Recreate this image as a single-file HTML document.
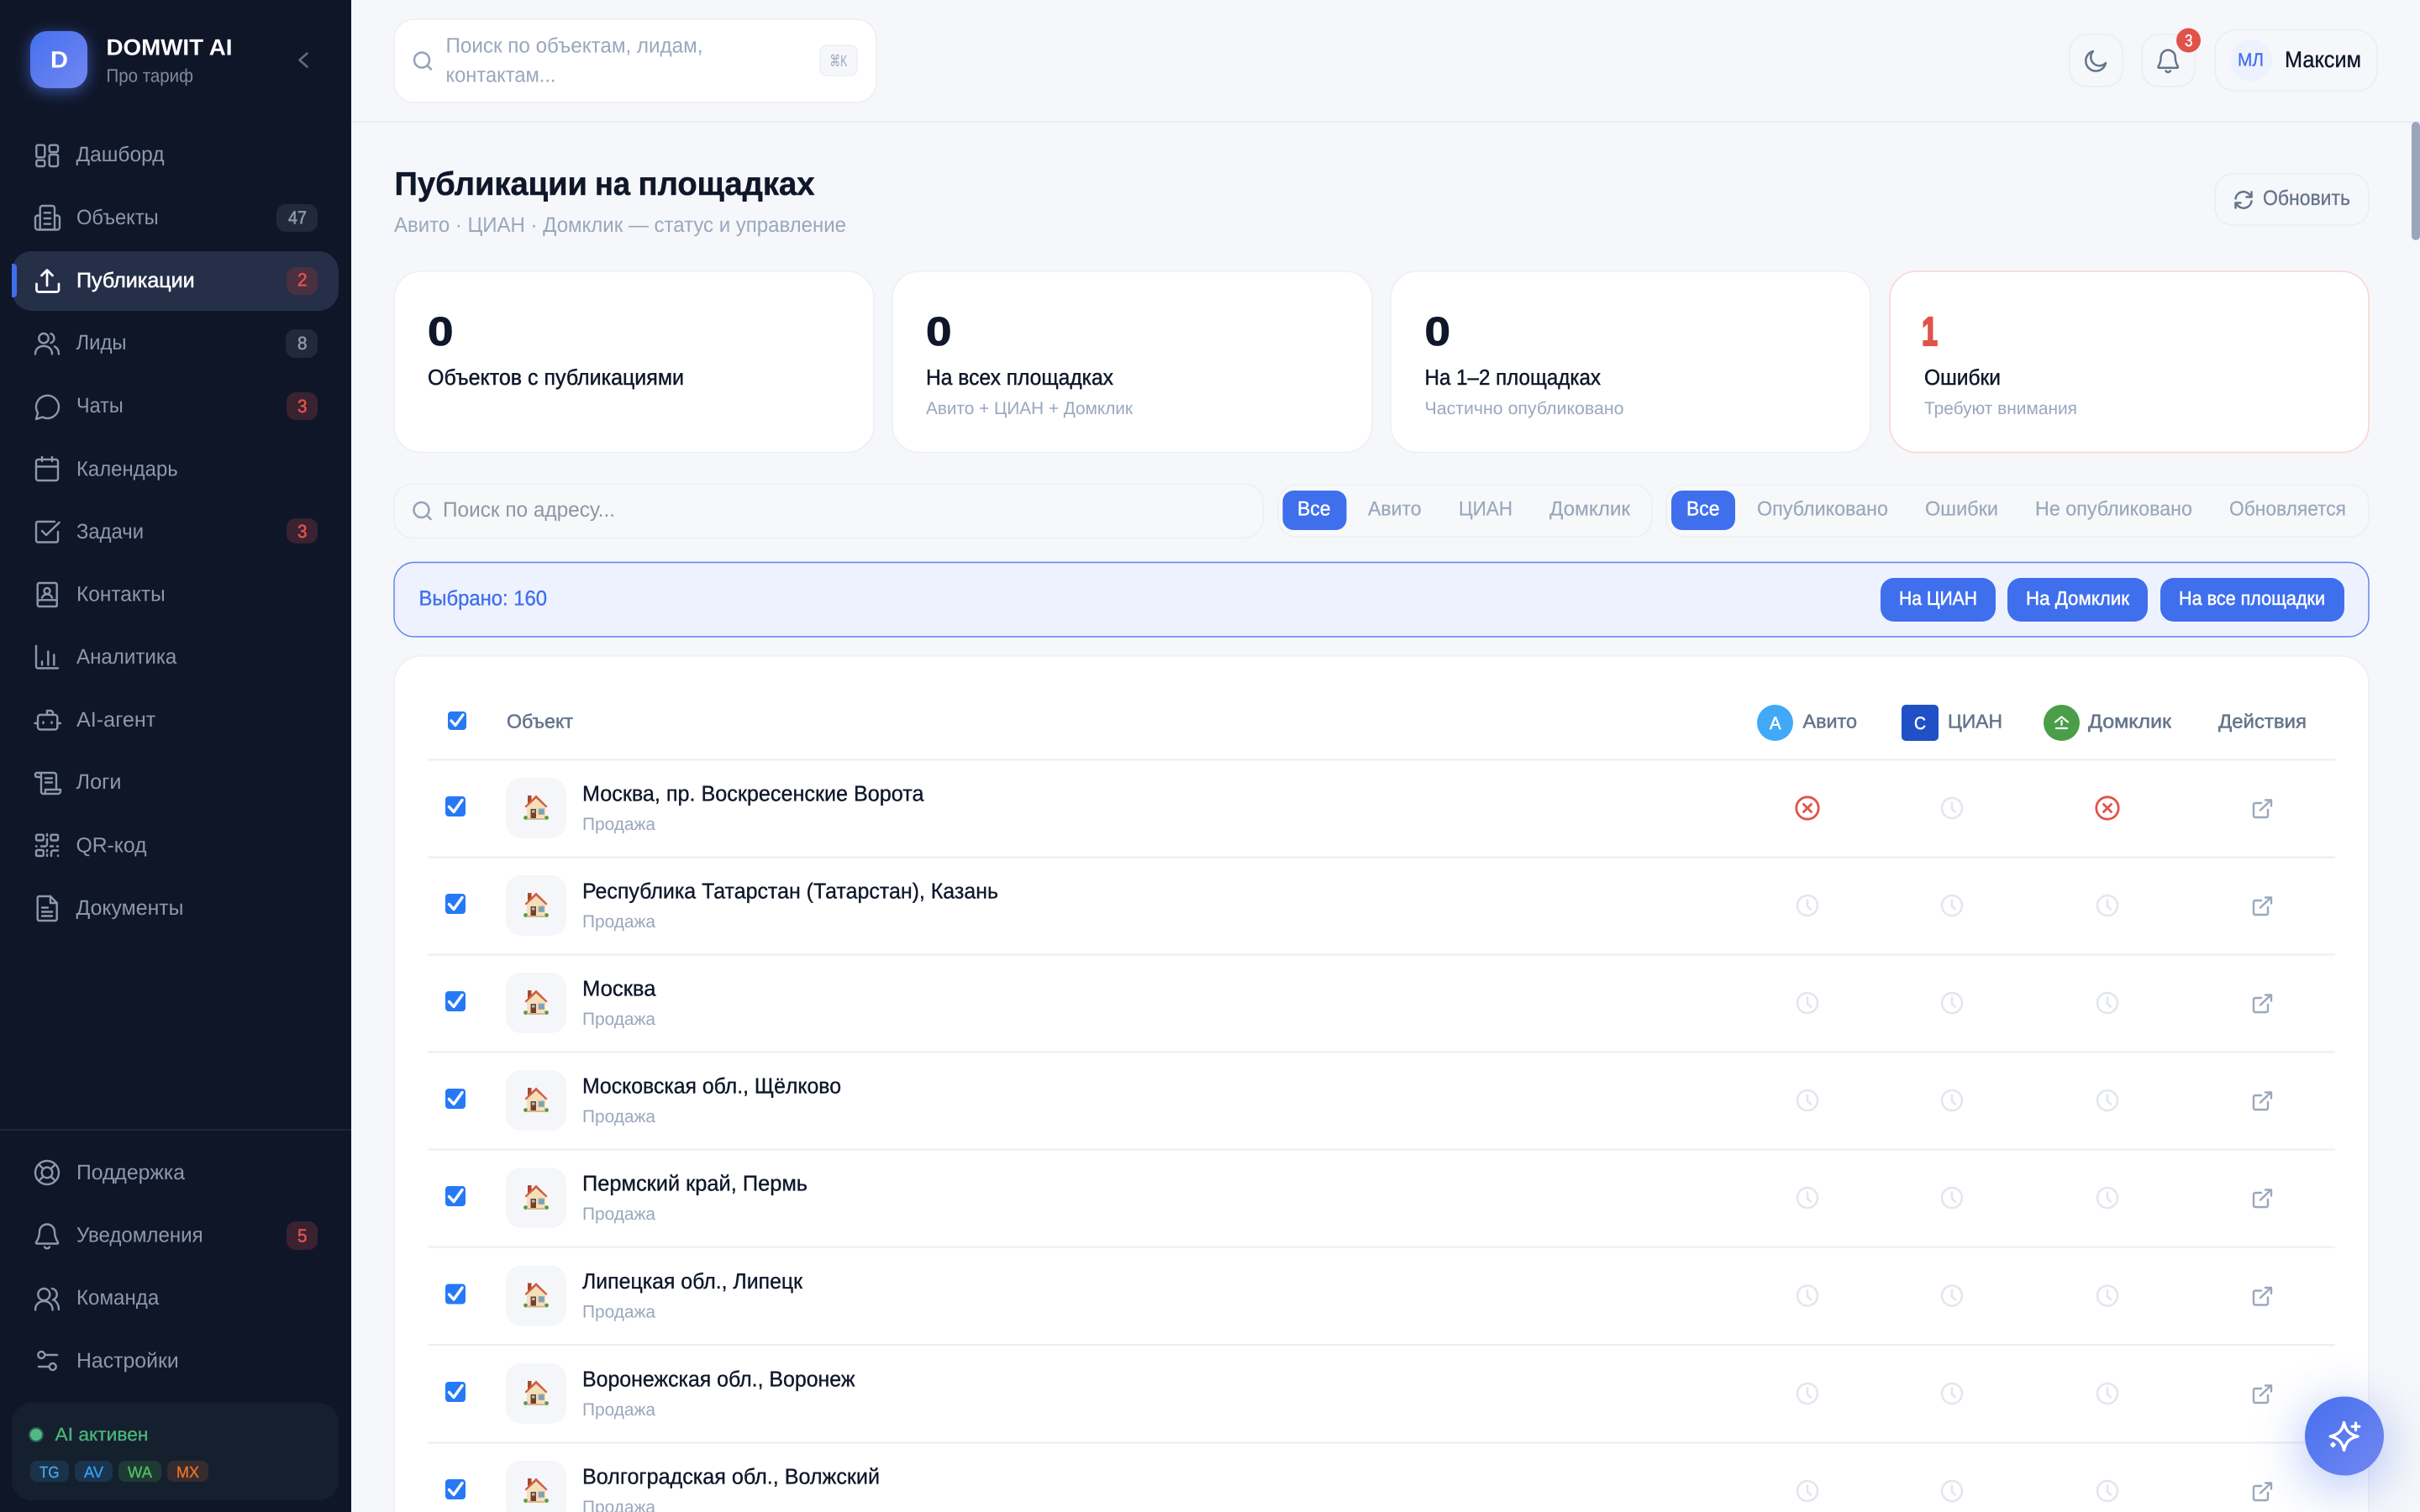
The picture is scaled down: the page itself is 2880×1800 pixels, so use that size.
<!DOCTYPE html>
<html lang="ru"><head><meta charset="utf-8"><title>Публикации на площадках</title>
<style>
html,body{margin:0;padding:0;width:2880px;height:1800px;overflow:hidden;background:#f6f7fa}
svg{display:block}
text{font-family:"Liberation Sans","DejaVu Sans",sans-serif;text-rendering:geometricPrecision;white-space:pre}
.nav{font-size:25px;fill:#8c98ac}
.ic{fill:none;stroke:#8c98ac;stroke-width:2.4;stroke-linecap:round;stroke-linejoin:round}
.bn{font-size:22px;fill:#8c98ac;stroke:#8c98ac;stroke-width:.6}
.br{font-size:22px;fill:#e0534a;stroke:#e0534a;stroke-width:.6}
.ph{font-size:25px;fill:#9aa7bd}
.lab{font-size:26px;fill:#0f172a;stroke:#0f172a;stroke-width:.45}
.sub{font-size:21px;fill:#9aa7bd}
.num{font-size:48px;font-weight:700;fill:#0f172a;stroke:#0f172a;stroke-width:.9}
.tab{font-size:24px;fill:#9aa7bd;stroke:#9aa7bd;stroke-width:.2}
.wht{font-size:23px;fill:#fff;stroke:#fff;stroke-width:.5}
.hd{font-size:23px;fill:#64748b;stroke:#64748b;stroke-width:.5}
.name{font-size:26px;fill:#0f172a;stroke:#0f172a;stroke-width:.35}
.ttl{font-size:39px;font-weight:700;fill:#0f172a;stroke:#0f172a;stroke-width:.5}
.clk{fill:none;stroke:#e2e6ee;stroke-width:2.6;stroke-linecap:round;stroke-linejoin:round}
.ext{fill:none;stroke:#9aa7bd;stroke-width:2.4;stroke-linecap:round;stroke-linejoin:round}
</style></head><body>
<svg xmlns="http://www.w3.org/2000/svg" width="2880" height="1800" viewBox="0 0 2880 1800">
<defs>
<linearGradient id="g1" x1="0" y1="0" x2="1" y2="1"><stop offset="0" stop-color="#4570ee"/><stop offset="1" stop-color="#7287f1"/></linearGradient>
<filter id="b8" x="-100%" y="-100%" width="300%" height="300%"><feGaussianBlur stdDeviation="9"/></filter>
<filter id="b30" x="-200%" y="-200%" width="500%" height="500%"><feGaussianBlur stdDeviation="30"/></filter>
<g id="cb"><rect x="530" y="948" width="24" height="24" rx="4" fill="#2679f6"/><path d="M534.500 960.500l5.500 6L550 952.500" fill="none" stroke="#fff" stroke-width="3.400" stroke-linecap="round" stroke-linejoin="round"/></g>
<g id="thumb">
<rect x="602" y="926" width="72" height="72" rx="18" fill="#f5f6f9"/>
<rect x="628" y="947" width="4.500" height="9" fill="#a9472f"/>
<path d="M627 960L638 949.500L649 960V974H627Z" fill="#f3e0bb"/>
<path d="M624.500 960L638 946.500L651.500 960L650 961.500L638 950.500L626 961.500Z" fill="#cf5f43"/>
<rect x="631.500" y="963" width="6.500" height="11.500" fill="#7c3d28"/><rect x="633" y="964.500" width="3.500" height="3" fill="#8fc0de"/>
<rect x="641" y="963" width="6.500" height="6.500" fill="#6ca5cc" stroke="#c2a67f" stroke-width="1"/>
<circle cx="625.500" cy="973.500" r="2.400" fill="#5c9a3d"/><circle cx="650.500" cy="973.500" r="2.400" fill="#5c9a3d"/>
<rect x="627" y="974" width="22" height="2" fill="#cfbb95"/>
</g>
<g id="clock" class="clk"><circle r="12"/><path d="M0-6.500V1l4 3.500"/></g>
<g id="xx"><circle r="13.200" fill="none" stroke="#e0534a" stroke-width="2.800"/><path d="M-4.500-4.500L4.500 4.500M4.500-4.500L-4.500 4.500" stroke="#e0534a" stroke-width="2.800" stroke-linecap="round"/></g>
<g id="ex" class="ext"><path d="M-1.500-7H-8.500a2 2 0 0 0-2 2V8a2 2 0 0 0 2 2H4.500a2 2 0 0 0 2-2V1"/><path d="M-2.500 1.500L10-10.500M3.500-10.500H10.500V-3.500"/></g>
</defs>

<rect width="2880" height="1800" fill="#f6f7fa"/>

<!-- SIDEBAR -->
<rect width="418" height="1800" fill="#0f1628"/>
<rect x="36" y="41" width="68" height="68" rx="20" fill="#5476ee" opacity=".6" filter="url(#b8)"/>
<rect x="36" y="37" width="68" height="68" rx="20" fill="url(#g1)"/>
<text x="60" y="80.500" font-size="28" font-weight="700" fill="#fff" textLength="21" lengthAdjust="spacingAndGlyphs">D</text>
<text x="126.500" y="65.500" font-size="27" font-weight="700" fill="#fff" textLength="150" lengthAdjust="spacingAndGlyphs">DOMWIT AI</text>
<text x="126.500" y="97.500" font-size="22" fill="#7e8a9f" textLength="103.500" lengthAdjust="spacingAndGlyphs">Про тариф</text>
<path d="M365.500 63.500L356.500 71.500L365.500 79.500" fill="none" stroke="#5f6b80" stroke-width="2.600" stroke-linecap="round" stroke-linejoin="round"/>

<rect x="14" y="299" width="389" height="71" rx="24" fill="#252f48"/>
<path d="M14 314h2a4 4 0 0 1 4 4v32a4 4 0 0 1-4 4h-2Z" fill="#3f6fed"/>

<g class="nav">
<text x="90.500" y="192" textLength="105" lengthAdjust="spacingAndGlyphs">Дашборд</text>
<text x="91" y="267" textLength="97.700" lengthAdjust="spacingAndGlyphs">Объекты</text>
<text x="91" y="342" textLength="140.700" lengthAdjust="spacingAndGlyphs" style="fill:#fff;stroke:#fff;stroke-width:.5">Публикации</text>
<text x="90.500" y="416" textLength="60" lengthAdjust="spacingAndGlyphs">Лиды</text>
<text x="91" y="491" textLength="55.700" lengthAdjust="spacingAndGlyphs">Чаты</text>
<text x="91" y="566.500" textLength="120.700" lengthAdjust="spacingAndGlyphs">Календарь</text>
<text x="91" y="641" textLength="80" lengthAdjust="spacingAndGlyphs">Задачи</text>
<text x="91" y="715.500" textLength="105.700" lengthAdjust="spacingAndGlyphs">Контакты</text>
<text x="91" y="790" textLength="119.300" lengthAdjust="spacingAndGlyphs">Аналитика</text>
<text x="91" y="865" textLength="94.300" lengthAdjust="spacingAndGlyphs">AI-агент</text>
<text x="90.500" y="939" textLength="54" lengthAdjust="spacingAndGlyphs">Логи</text>
<text x="90.500" y="1014.500" textLength="84" lengthAdjust="spacingAndGlyphs">QR-код</text>
<text x="90.500" y="1089" textLength="128" lengthAdjust="spacingAndGlyphs">Документы</text>
<text x="91" y="1404" textLength="129" lengthAdjust="spacingAndGlyphs">Поддержка</text>
<text x="91" y="1478.500" textLength="150.700" lengthAdjust="spacingAndGlyphs">Уведомления</text>
<text x="91" y="1553" textLength="98.300" lengthAdjust="spacingAndGlyphs">Команда</text>
<text x="91" y="1628" textLength="121.700" lengthAdjust="spacingAndGlyphs">Настройки</text>
</g>

<g class="ic">
<g transform="translate(38,166)"><rect x="5.300" y="6.700" width="10" height="14.600" rx="2"/><rect x="20.700" y="6.700" width="10.300" height="8.300" rx="2"/><rect x="5.300" y="24.700" width="10" height="7.300" rx="2"/><rect x="20.700" y="18" width="10.300" height="14" rx="2"/></g>
<g transform="translate(38,241)"><path d="M9.700 32.300V7a3 3 0 0 1 3-3H24a3 3 0 0 1 3 3V32.300Z"/><path d="M9.700 15.500H7a3 3 0 0 0-3 3v11a3 3 0 0 0 3 3H30a3 3 0 0 0 3-3v-11a3 3 0 0 0-3-3H27"/><path d="M14.700 12.300H22M14.700 19H22M14.700 25.600H22"/></g>
<g transform="translate(38,316)" style="stroke:#fff;stroke-width:2.700"><path d="M18 24V6M11.500 12L18 5.500L24.500 12"/><path d="M5.500 22v7a2.500 2.500 0 0 0 2.500 2.500H29.500a2.500 2.500 0 0 0 2.500-2.500v-7"/></g>
<g transform="translate(38,390)"><circle cx="14" cy="12.700" r="5.700"/><path d="M4 31.500c0-6 4-9.500 10-9.500s10 3.500 10 9.500"/><path d="M22.500 7.200a5.800 5.800 0 0 1 0 11"/><path d="M27 22.500c3 1.500 5 4.500 5 9"/></g>
<g transform="translate(38,465)"><path d="M5 34l2-7.500A13.500 13.500 0 1 1 12.500 31.500Z"/></g>
<g transform="translate(38,540)"><rect x="5" y="7" width="26" height="25" rx="2.500"/><path d="M5 15.500H31M12 4V9M24 4V9"/></g>
<g transform="translate(38,614)"><path d="M27 7H7a2 2 0 0 0-2 2V29.500a2 2 0 0 0 2 2H29a2 2 0 0 0 2-2V19"/><path d="M12 18l5 5L32.500 8"/></g>
<g transform="translate(38,689)"><path d="M8.700 5H27.700a2 2 0 0 1 2 2V32a1 1 0 0 1-1 1H8.700a2 2 0 0 1-2-2V7a2 2 0 0 1 2-2Z"/><path d="M6.700 28a3 3 0 0 1 3-2.700H29.700"/><circle cx="18" cy="14.500" r="3.500"/><path d="M12 22.500c1-2.500 3.500-4 6-4s5 1.500 6 4"/></g>
<g transform="translate(38,763.500)"><path d="M5 5.500V30a2 2 0 0 0 2 2H31"/><path d="M12 24V28M19.300 12V28M26.300 16V28"/></g>
<g transform="translate(38,838)"><rect x="7" y="13" width="23.300" height="17.500" rx="3"/><path d="M18 13V8h4a3 3 0 0 1 3 3"/><path d="M3.500 23H7M30.300 23H34"/><path d="M13.500 21.500v1.500M23.500 21.500v1.500"/></g>
<g transform="translate(38,913)"><path d="M8 7H26a3 3 0 0 1 3 3V26"/><path d="M11 11V29.500a2.500 2.500 0 0 0 5 0V27H34v2a3 3 0 0 1-3 3H13"/><path d="M11 12H6a2 2 0 0 1-2-2V9a2 2 0 0 1 2-2h2a3 3 0 0 1 3 3"/><path d="M16 13.500H24M16 18.500H24"/></g>
<g transform="translate(38,988)"><rect x="5" y="5.700" width="8.700" height="6.800" rx="1.500"/><rect x="22.500" y="5.700" width="8.500" height="6.800" rx="1.500"/><rect x="5" y="24" width="8.700" height="7" rx="1.500"/><path d="M18 5V7M18 11V17a2.500 2.500 0 0 1-2.500 2.500H11M5 19.500h.5M22 19.500H25M30 19.500H31M18 24V25.500M18 29.500V31M23 31V27a2.500 2.500 0 0 1 2.500-2.500H31M31 30.500V31"/></g>
<g transform="translate(38,1063)"><path d="M8.700 4H22L29.700 12V31a2 2 0 0 1-2 2H8.700a2 2 0 0 1-2-2V6a2 2 0 0 1 2-2Z"/><path d="M22 4V12H29.700M12 17.500H19M12 22.500H24M12 27.500H24"/></g>
<g transform="translate(38,1378)"><circle cx="18" cy="18" r="14"/><circle cx="18" cy="18" r="6.300"/><path d="M13.500 13.500L8.200 8.200M22.500 13.500L27.800 8.200M13.500 22.500L8.200 27.800M22.500 22.500L27.800 27.800"/></g>
<g transform="translate(38,1453)"><path d="M18 4.500a9 9 0 0 0-9 9c0 7-3 10.500-4 12.500a1 1 0 0 0 1 1.500H30a1 1 0 0 0 1-1.500c-1-2-4-5.500-4-12.500a9 9 0 0 0-9-9Z"/><path d="M15 31.500a3.500 3.500 0 0 0 6 0"/></g>
<g transform="translate(38,1528)"><circle cx="14.300" cy="13" r="7"/><path d="M4 31.500c0-6 4-10.500 10.300-10.500s10.300 4.500 10.300 10.500"/><path d="M24 6a7 7 0 0 1 1 13.500"/><path d="M27 20c3 2.500 5 6 5 11"/></g>
<g transform="translate(38,1602)"><circle cx="11.300" cy="11" r="4"/><path d="M15.300 11H30M8 25H20.700"/><circle cx="24.700" cy="25" r="4"/></g>
</g>

<rect x="329" y="243" width="49" height="33" rx="11" fill="#222938"/><text x="343" y="266.500" class="bn" textLength="22" lengthAdjust="spacingAndGlyphs">47</text>
<rect x="341" y="318" width="37" height="33" rx="11" fill="#4a3040"/><text x="354" y="340.500" class="br" textLength="11.500" lengthAdjust="spacingAndGlyphs">2</text>
<rect x="340" y="392" width="38" height="34" rx="11" fill="#222938"/><text x="354" y="416" class="bn" textLength="11.500" lengthAdjust="spacingAndGlyphs">8</text>
<rect x="341" y="467" width="37" height="33" rx="11" fill="#3a2230"/><text x="354" y="491" class="br" textLength="11.500" lengthAdjust="spacingAndGlyphs">3</text>
<rect x="341" y="617" width="37" height="30" rx="11" fill="#3a2230"/><text x="354" y="640" class="br" textLength="11.500" lengthAdjust="spacingAndGlyphs">3</text>
<rect x="341" y="1454" width="37" height="34" rx="11" fill="#3a2230"/><text x="354" y="1478.500" class="br" textLength="11.500" lengthAdjust="spacingAndGlyphs">5</text>

<rect y="1344" width="418" height="2" fill="#1e2639"/>
<rect x="14" y="1670" width="389" height="116" rx="24" fill="#15202e"/>
<circle cx="43" cy="1708" r="9" fill="#2b5a4c"/><circle cx="43" cy="1708" r="7" fill="#52b986"/>
<text x="65.500" y="1715" font-size="22" fill="#4bb57c" stroke="#4bb57c" stroke-width=".3" textLength="111" lengthAdjust="spacingAndGlyphs">AI активен</text>
<rect x="36" y="1739" width="46" height="25" rx="8" fill="#1b3349"/><text x="47" y="1759" font-size="19" fill="#45a5ef" stroke="#45a5ef" stroke-width=".3" textLength="23.500" lengthAdjust="spacingAndGlyphs">TG</text>
<rect x="89" y="1739" width="45" height="25" rx="8" fill="#1a3450"/><text x="100" y="1759" font-size="19" fill="#38a0f0" stroke="#38a0f0" stroke-width=".3" textLength="23" lengthAdjust="spacingAndGlyphs">AV</text>
<rect x="141" y="1739" width="51" height="25" rx="8" fill="#1f3a34"/><text x="152" y="1759" font-size="19" fill="#52c05e" stroke="#52c05e" stroke-width=".3" textLength="29" lengthAdjust="spacingAndGlyphs">WA</text>
<rect x="199" y="1739" width="49" height="25" rx="8" fill="#362c2f"/><text x="210" y="1759" font-size="19" fill="#ef7326" stroke="#ef7326" stroke-width=".3" textLength="27" lengthAdjust="spacingAndGlyphs">MX</text>

<!-- TOPBAR -->
<rect x="418" y="144" width="2462" height="2" fill="#ebedf2"/>
<rect x="469" y="23" width="574" height="99" rx="24" fill="#fff" stroke="#edeff3" stroke-width="1.600"/>
<g fill="none" stroke="#94a3b8" stroke-width="2.500" stroke-linecap="round"><circle cx="502" cy="71.500" r="9"/><path d="M508.800 78.300L513 82.500"/></g>
<text x="530.500" y="62.500" class="ph" textLength="306" lengthAdjust="spacingAndGlyphs">Поиск по объектам, лидам,</text>
<text x="530.500" y="97.500" class="ph" textLength="131" lengthAdjust="spacingAndGlyphs">контактам...</text>
<rect x="976" y="54" width="44" height="36" rx="8" fill="#f6f7fa" stroke="#edeff3" stroke-width="1.600"/>
<text x="987.500" y="79" font-size="19" fill="#9aa7bd" textLength="21" lengthAdjust="spacingAndGlyphs">⌘K</text>

<rect x="2463" y="41" width="63" height="62" rx="20" fill="none" stroke="#ebedf2" stroke-width="1.600"/>
<path d="M2506 75A12 12 0 1 1 2491 61A10 10 0 0 0 2506 75Z" fill="none" stroke="#64748b" stroke-width="2.500" stroke-linejoin="round"/>
<rect x="2549" y="41" width="63" height="62" rx="20" fill="none" stroke="#ebedf2" stroke-width="1.600"/>
<g transform="translate(2564,56) scale(.9)" fill="none" stroke="#64748b" stroke-width="2.700" stroke-linecap="round" stroke-linejoin="round"><path d="M18 4a9.500 9.500 0 0 0-9.500 9.500c0 7-2.500 10.500-3.500 12.500a1 1 0 0 0 1 1.500H30a1 1 0 0 0 1-1.500c-1-2-3.500-5.500-3.500-12.500A9.500 9.500 0 0 0 18 4Z"/><path d="M15 31.500a3.500 3.500 0 0 0 6 0"/></g>
<circle cx="2604.500" cy="48" r="14.500" fill="#e0534a"/>
<text x="2600" y="55" font-size="20" fill="#fff" stroke="#fff" stroke-width=".4" textLength="9.500" lengthAdjust="spacingAndGlyphs">3</text>
<rect x="2636" y="36" width="193" height="72" rx="24" fill="none" stroke="#ebedf2" stroke-width="1.600"/>
<circle cx="2679" cy="72" r="25" fill="#eef2fe"/>
<text x="2663" y="78.500" font-size="22" fill="#3f6fed" stroke="#3f6fed" stroke-width=".3" textLength="31" lengthAdjust="spacingAndGlyphs">МЛ</text>
<text x="2719" y="80" font-size="27" fill="#0f172a" stroke="#0f172a" stroke-width=".35" textLength="91" lengthAdjust="spacingAndGlyphs">Максим</text>

<!-- HEADER -->
<text x="469.500" y="232" class="ttl" textLength="229.500" lengthAdjust="spacingAndGlyphs">Публикации</text>
<text x="708" y="232" class="ttl" textLength="42" lengthAdjust="spacingAndGlyphs">на</text>
<text x="759.500" y="232" class="ttl" textLength="210" lengthAdjust="spacingAndGlyphs">площадках</text>
<text x="469" y="276" font-size="25" fill="#9aa7bd" textLength="538" lengthAdjust="spacingAndGlyphs">Авито · ЦИАН · Домклик — статус и управление</text>
<rect x="2636" y="207" width="183" height="61" rx="21" fill="none" stroke="#ebedf2" stroke-width="1.600"/>
<g transform="translate(2670,238)" fill="none" stroke="#64748b" stroke-width="2.500" stroke-linecap="round" stroke-linejoin="round"><path d="M-9.500-1.500A9.500 9.500 0 0 1 7-6.500L9.500-4"/><path d="M9.500-9.500V-3.500H3.500"/><path d="M9.500 1.500A9.500 9.500 0 0 1-7 6.500L-9.500 4"/><path d="M-9.500 9.500V3.500H-3.500"/></g>
<text x="2693" y="244" font-size="25" fill="#64748b" stroke="#64748b" stroke-width=".3" textLength="104" lengthAdjust="spacingAndGlyphs">Обновить</text>

<!-- STATS -->
<g fill="#fff" stroke="#edeff4" stroke-width="1.600">
<rect x="469" y="323" width="571" height="215.500" rx="32"/>
<rect x="1062" y="323" width="571" height="215.500" rx="32"/>
<rect x="1655" y="323" width="571" height="215.500" rx="32"/>
<rect x="2249" y="323" width="570" height="215.500" rx="32" stroke="#fad6d3"/>
</g>
<text x="509" y="411" class="num" textLength="30.500" lengthAdjust="spacingAndGlyphs">0</text>
<text x="1102" y="411" class="num" textLength="30.500" lengthAdjust="spacingAndGlyphs">0</text>
<text x="1695.500" y="411" class="num" textLength="30.500" lengthAdjust="spacingAndGlyphs">0</text>
<text x="2287" y="411" class="num" style="fill:#e0534a;stroke:#e0534a;stroke-width:2.200" textLength="19" lengthAdjust="spacingAndGlyphs">1</text>
<text x="509" y="458" class="lab" textLength="305" lengthAdjust="spacingAndGlyphs">Объектов с публикациями</text>
<text x="1102" y="458" class="lab" textLength="223" lengthAdjust="spacingAndGlyphs">На всех площадках</text>
<text x="1695.500" y="458" class="lab" textLength="209.500" lengthAdjust="spacingAndGlyphs">На 1–2 площадках</text>
<text x="2290" y="458" class="lab" textLength="91" lengthAdjust="spacingAndGlyphs">Ошибки</text>
<text x="1102" y="493" class="sub" textLength="246" lengthAdjust="spacingAndGlyphs">Авито + ЦИАН + Домклик</text>
<text x="1695.500" y="493" class="sub" textLength="237" lengthAdjust="spacingAndGlyphs">Частично опубликовано</text>
<text x="2290" y="493" class="sub" textLength="182" lengthAdjust="spacingAndGlyphs">Требуют внимания</text>

<!-- FILTERS -->
<rect x="469" y="576" width="1034" height="64" rx="22" fill="#f7f8fa" stroke="#edeff3" stroke-width="1.600"/>
<g fill="none" stroke="#94a3b8" stroke-width="2.500" stroke-linecap="round"><circle cx="501.500" cy="607" r="9"/><path d="M508.300 613.800L512.500 618"/></g>
<text x="527" y="615" font-size="25" fill="#8e96a3" textLength="205" lengthAdjust="spacingAndGlyphs">Поиск по адресу...</text>
<rect x="1521" y="577" width="445" height="62" rx="22" fill="#f7f8fa" stroke="#edeff3" stroke-width="1.600"/>
<rect x="1526.500" y="584" width="76" height="47" rx="13" fill="#3f6fed"/>
<text x="1544" y="613.500" class="tab" style="fill:#fff;stroke:#fff;stroke-width:.4" textLength="39.500" lengthAdjust="spacingAndGlyphs">Все</text>
<text x="1628" y="613.500" class="tab" textLength="63.500" lengthAdjust="spacingAndGlyphs">Авито</text>
<text x="1736" y="613.500" class="tab" textLength="64" lengthAdjust="spacingAndGlyphs">ЦИАН</text>
<text x="1844" y="613.500" class="tab" textLength="96" lengthAdjust="spacingAndGlyphs">Домклик</text>
<rect x="1983" y="577" width="836" height="62" rx="22" fill="#f7f8fa" stroke="#edeff3" stroke-width="1.600"/>
<rect x="1989" y="584" width="76" height="47" rx="13" fill="#3f6fed"/>
<text x="2007" y="613.500" class="tab" style="fill:#fff;stroke:#fff;stroke-width:.4" textLength="39.500" lengthAdjust="spacingAndGlyphs">Все</text>
<text x="2091" y="613.500" class="tab" textLength="156" lengthAdjust="spacingAndGlyphs">Опубликовано</text>
<text x="2291" y="613.500" class="tab" textLength="87" lengthAdjust="spacingAndGlyphs">Ошибки</text>
<text x="2422" y="613.500" class="tab" textLength="187" lengthAdjust="spacingAndGlyphs">Не опубликовано</text>
<text x="2653" y="613.500" class="tab" textLength="139" lengthAdjust="spacingAndGlyphs">Обновляется</text>

<!-- SELECTED BAR -->
<rect x="469" y="669.500" width="2350" height="88.500" rx="24" fill="#eef2fe" stroke="#5a82ef" stroke-width="1.400"/>
<text x="498.500" y="720.500" font-size="25" fill="#3f6fed" stroke="#3f6fed" stroke-width=".35" textLength="152.500" lengthAdjust="spacingAndGlyphs">Выбрано: 160</text>
<rect x="2238" y="688" width="137" height="52" rx="16" fill="#3f6fed"/>
<text x="2260" y="720" class="wht" textLength="93" lengthAdjust="spacingAndGlyphs">На ЦИАН</text>
<rect x="2389" y="688" width="167" height="52" rx="16" fill="#3f6fed"/>
<text x="2411" y="720" class="wht" textLength="123" lengthAdjust="spacingAndGlyphs">На Домклик</text>
<rect x="2571" y="688" width="219" height="52" rx="16" fill="#3f6fed"/>
<text x="2593" y="720" class="wht" textLength="174" lengthAdjust="spacingAndGlyphs">На все площадки</text>

<!-- TABLE -->
<rect x="469" y="781" width="2350" height="1100" rx="32" fill="#fff" stroke="#edeff4" stroke-width="1.600"/>
<rect x="533" y="847" width="22" height="22" rx="4" fill="#2679f6"/>
<path d="M537 858l5 5.500L551 851" fill="none" stroke="#fff" stroke-width="3.200" stroke-linecap="round" stroke-linejoin="round"/>
<text x="603" y="866.500" class="hd" textLength="79" lengthAdjust="spacingAndGlyphs">Объект</text>
<circle cx="2112.500" cy="860.500" r="21.500" fill="#40a9f8"/>
<text x="2106" y="868" font-size="21" fill="#fff" stroke="#fff" stroke-width=".5" textLength="13.500" lengthAdjust="spacingAndGlyphs">A</text>
<text x="2145.500" y="866.500" class="hd" textLength="64.500" lengthAdjust="spacingAndGlyphs">Авито</text>
<rect x="2263" y="839" width="44" height="43" rx="5" fill="#2050c6"/>
<text x="2278" y="868" font-size="21" fill="#fff" stroke="#fff" stroke-width=".5" textLength="14" lengthAdjust="spacingAndGlyphs">C</text>
<text x="2318" y="866.500" class="hd" textLength="65" lengthAdjust="spacingAndGlyphs">ЦИАН</text>
<circle cx="2453.500" cy="860.500" r="21.500" fill="#4a9e48"/>
<path d="M2446 859.500L2453.500 853.500L2461 859.500M2453.500 858V863M2447 867H2460" fill="none" stroke="#fff" stroke-width="2.200" stroke-linecap="round"/>
<text x="2485" y="866.500" class="hd" textLength="99" lengthAdjust="spacingAndGlyphs">Домклик</text>
<text x="2640" y="866.500" class="hd" textLength="105" lengthAdjust="spacingAndGlyphs">Действия</text>
<rect x="509" y="903.500" width="2270" height="2" fill="#eceef3"/>

<!-- rows -->
<g>
<use href="#cb"/><use href="#thumb"/>
<text x="693" y="953.500" class="name" textLength="406.500" lengthAdjust="spacingAndGlyphs">Москва, пр. Воскресенские Ворота</text>
<text x="693" y="988" class="sub" textLength="87" lengthAdjust="spacingAndGlyphs">Продажа</text>
<use href="#xx" transform="translate(2151,962)"/><use href="#clock" transform="translate(2323,962)"/><use href="#xx" transform="translate(2508,962)"/><use href="#ex" transform="translate(2692.500,963)"/>
<rect x="509" y="1019.500" width="2270" height="2" fill="#eceef3"/>
</g>
<g transform="translate(0,116)">
<use href="#cb"/><use href="#thumb"/>
<text x="693" y="953.500" class="name" textLength="495" lengthAdjust="spacingAndGlyphs">Республика Татарстан (Татарстан), Казань</text>
<text x="693" y="988" class="sub" textLength="87" lengthAdjust="spacingAndGlyphs">Продажа</text>
<use href="#clock" transform="translate(2151,962)"/><use href="#clock" transform="translate(2323,962)"/><use href="#clock" transform="translate(2508,962)"/><use href="#ex" transform="translate(2692.500,963)"/>
<rect x="509" y="1019.500" width="2270" height="2" fill="#eceef3"/>
</g>
<g transform="translate(0,232)">
<use href="#cb"/><use href="#thumb"/>
<text x="693" y="953.500" class="name" textLength="87.500" lengthAdjust="spacingAndGlyphs">Москва</text>
<text x="693" y="988" class="sub" textLength="87" lengthAdjust="spacingAndGlyphs">Продажа</text>
<use href="#clock" transform="translate(2151,962)"/><use href="#clock" transform="translate(2323,962)"/><use href="#clock" transform="translate(2508,962)"/><use href="#ex" transform="translate(2692.500,963)"/>
<rect x="509" y="1019.500" width="2270" height="2" fill="#eceef3"/>
</g>
<g transform="translate(0,348)">
<use href="#cb"/><use href="#thumb"/>
<text x="693" y="953.500" class="name" textLength="308" lengthAdjust="spacingAndGlyphs">Московская обл., Щёлково</text>
<text x="693" y="988" class="sub" textLength="87" lengthAdjust="spacingAndGlyphs">Продажа</text>
<use href="#clock" transform="translate(2151,962)"/><use href="#clock" transform="translate(2323,962)"/><use href="#clock" transform="translate(2508,962)"/><use href="#ex" transform="translate(2692.500,963)"/>
<rect x="509" y="1019.500" width="2270" height="2" fill="#eceef3"/>
</g>
<g transform="translate(0,464)">
<use href="#cb"/><use href="#thumb"/>
<text x="693" y="953.500" class="name" textLength="268" lengthAdjust="spacingAndGlyphs">Пермский край, Пермь</text>
<text x="693" y="988" class="sub" textLength="87" lengthAdjust="spacingAndGlyphs">Продажа</text>
<use href="#clock" transform="translate(2151,962)"/><use href="#clock" transform="translate(2323,962)"/><use href="#clock" transform="translate(2508,962)"/><use href="#ex" transform="translate(2692.500,963)"/>
<rect x="509" y="1019.500" width="2270" height="2" fill="#eceef3"/>
</g>
<g transform="translate(0,580.500)">
<use href="#cb"/><use href="#thumb"/>
<text x="693" y="953.500" class="name" textLength="262" lengthAdjust="spacingAndGlyphs">Липецкая обл., Липецк</text>
<text x="693" y="988" class="sub" textLength="87" lengthAdjust="spacingAndGlyphs">Продажа</text>
<use href="#clock" transform="translate(2151,962)"/><use href="#clock" transform="translate(2323,962)"/><use href="#clock" transform="translate(2508,962)"/><use href="#ex" transform="translate(2692.500,963)"/>
<rect x="509" y="1019.500" width="2270" height="2" fill="#eceef3"/>
</g>
<g transform="translate(0,697)">
<use href="#cb"/><use href="#thumb"/>
<text x="693" y="953.500" class="name" textLength="324.500" lengthAdjust="spacingAndGlyphs">Воронежская обл., Воронеж</text>
<text x="693" y="988" class="sub" textLength="87" lengthAdjust="spacingAndGlyphs">Продажа</text>
<use href="#clock" transform="translate(2151,962)"/><use href="#clock" transform="translate(2323,962)"/><use href="#clock" transform="translate(2508,962)"/><use href="#ex" transform="translate(2692.500,963)"/>
<rect x="509" y="1019.500" width="2270" height="2" fill="#eceef3"/>
</g>
<g transform="translate(0,813)">
<use href="#cb"/><use href="#thumb"/>
<text x="693" y="953.500" class="name" textLength="354" lengthAdjust="spacingAndGlyphs">Волгоградская обл., Волжский</text>
<text x="693" y="988" class="sub" textLength="87" lengthAdjust="spacingAndGlyphs">Продажа</text>
<use href="#clock" transform="translate(2151,962)"/><use href="#clock" transform="translate(2323,962)"/><use href="#clock" transform="translate(2508,962)"/><use href="#ex" transform="translate(2692.500,963)"/>
</g>

<!-- SCROLLBAR -->
<rect x="2870" y="145" width="10" height="141" rx="5" fill="#9aa6bb"/>

<!-- FAB -->
<circle cx="2790" cy="1722" r="52" fill="#4a74ee" opacity=".38" filter="url(#b30)"/>
<circle cx="2790" cy="1709.500" r="47" fill="url(#g1)"/>
<g fill="none" stroke="#fff" stroke-linecap="round" stroke-linejoin="round">
<path d="M2789.600 1693.500c1.800 9.500 6.800 14.600 16.400 16.500c-9.600 1.900-14.600 7-16.400 16.500c-1.800-9.500-6.800-14.600-16.400-16.500c9.600-1.900 14.600-7 16.400-16.500Z" stroke-width="3.400"/>
<path d="M2803.500 1694V1702.500M2799.200 1698.200H2807.800" stroke-width="3.200"/>
<path d="M2776.500 1718.500V1721.500M2775 1720H2778" stroke-width="3.400"/>
</g>
</svg>
</body></html>
